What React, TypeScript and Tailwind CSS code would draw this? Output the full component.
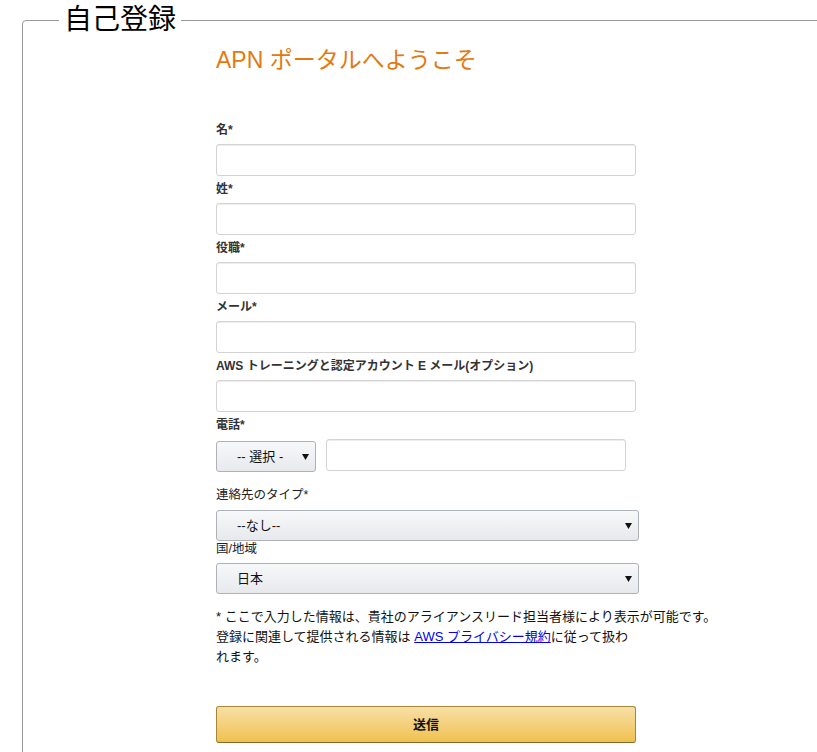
import { useState } from "react"

const inputCls =
  "block w-[420px] h-[32px] rounded-[3px] border border-[#d3d3d3] bg-white px-[7px] text-[13px] shadow-[inset_0_1px_0_rgba(0,0,0,0.07)] outline-none"

function Field({ label }: { label: string }) {
  return (
    <div className="mt-[4px] first:mt-0">
      <label className="block h-[18px] leading-[18px] text-[12px] font-bold text-[#333] mb-[5px]">{label}</label>
      <input type="text" className={inputCls} />
    </div>
  )
}

function Arrow() {
  return (
    <svg width="7" height="6" viewBox="0 0 7 6" className="pointer-events-none absolute top-1/2 -translate-y-1/2 right-[7px]">
      <path d="M0 0h7L3.5 6z" fill="#111" />
    </svg>
  )
}

function FakeSelect({ value, options, className }: { value: string; options: string[]; className: string }) {
  const [v, setV] = useState(value)
  return (
    <div className={`relative ${className}`}>
      <select
        value={v}
        onChange={(e) => setV(e.target.value)}
        className="appearance-none w-full h-full rounded-[3px] border border-[#adb1b8] bg-gradient-to-b from-[#f7f8fa] to-[#e7e9ec] pl-[20px] pr-[20px] text-[13px] text-[#111] outline-none"
      >
        {options.map((o) => (
          <option key={o}>{o}</option>
        ))}
      </select>
      <Arrow />
    </div>
  )
}

export default function App() {
  return (
    <div
      className="h-[752px] w-full overflow-hidden bg-white"
      style={{ fontFamily: '"Liberation Sans", "Noto Sans CJK JP", sans-serif' }}
    >
      <div className="pl-[22px] pt-[3px]">
        <fieldset className="w-[1200px] min-h-[800px] border border-[#999] rounded-[4px]">
          <legend className="ml-[36px] px-[5px] text-[28px] leading-[34px] text-black">自己登録</legend>

          <div className="pl-[193px]">
            <h1 className="mt-[8px] text-[23px] leading-[30px] text-[#e47911] font-normal">APN ポータルへようこそ</h1>

            <form className="mt-[46px] w-[430px]" onSubmit={(e) => e.preventDefault()}>
              <Field label="名*" />
              <Field label="姓*" />
              <Field label="役職*" />
              <Field label="メール*" />
              <Field label="AWS トレーニングと認定アカウント E メール(オプション)" />

              <label className="mt-[4px] block h-[18px] leading-[18px] text-[12px] font-bold text-[#333] mb-[5px]">電話*</label>
              <div className="flex items-start gap-[10px]">
                <FakeSelect value="-- 選択 -" options={["-- 選択 -", "+81", "+1"]} className="mt-[2px] w-[100px] h-[31px]" />
                <input type="tel" className="block w-[300px] h-[32px] rounded-[3px] border border-[#d3d3d3] bg-white px-[7px] text-[13px] shadow-[inset_0_1px_0_rgba(0,0,0,0.07)] outline-none" />
              </div>

              <label className="mt-[14px] block h-[18px] leading-[18px] text-[12.5px] text-[#222] mb-[6px]">連絡先のタイプ*</label>
              <FakeSelect value="--なし--" options={["--なし--", "技術", "営業"]} className="w-[423px] h-[31px]" />

              <label className="block h-[16px] leading-[16px] text-[12.5px] text-[#222] mb-[6px]">国/地域</label>
              <FakeSelect value="日本" options={["日本", "アメリカ合衆国"]} className="w-[423px] h-[31px]" />

              <div className="mt-[13px] text-[13px] leading-[20px] text-[#111]">
                <p className="whitespace-nowrap">* ここで入力した情報は、貴社のアライアンスリード担当者様により表示が可能です。</p>
                <p className="w-[416px]">
                  登録に関連して提供される情報は <a href="#" className="text-[#0000ee] underline">AWS プライバシー規約</a>に従って扱われます。
                </p>
              </div>

              <button
                type="submit"
                className="mt-[39px] block w-[420px] h-[37px] rounded-[3px] border border-[#a88734] border-b-[#846a29] bg-gradient-to-b from-[#f7dfa5] to-[#f0c14b] text-[13px] font-bold text-[#111]"
              >
                送信
              </button>
            </form>
          </div>
        </fieldset>
      </div>
    </div>
  )
}
